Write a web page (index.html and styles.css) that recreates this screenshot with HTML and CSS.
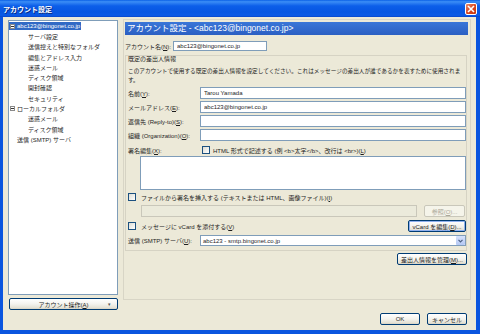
FILE: index.html
```html
<!DOCTYPE html>
<html>
<head>
<meta charset="utf-8">
<title>アカウント設定</title>
<link rel="stylesheet" href="styles.css">
</head>
<body>
<div class="window">
	<div class="titlebar">
		<span class="title">アカウント設定</span>
		<span class="close"><svg width="8" height="8" viewBox="0 0 8 8"><path d="M1 1L7 7M7 1L1 7" stroke="#fff" stroke-width="1.6"/></svg></span>
	</div>
	<div class="client">
		<div class="content">
			<div class="side">
				<ul class="tree">
					<li class="top"><span class="sel"><i class="twisty"></i>abc123@bingonet.co.jp</span></li>
					<li class="child">サーバ設定</li>
					<li class="child">送信控えと特別なフォルダ</li>
					<li class="child">編集とアドレス入力</li>
					<li class="child">迷惑メール</li>
					<li class="child">ディスク領域</li>
					<li class="child">開封確認</li>
					<li class="child">セキュリティ</li>
					<li class="top"><i class="twisty"></i>ローカルフォルダ</li>
					<li class="child">迷惑メール</li>
					<li class="child">ディスク領域</li>
					<li class="top leaf">送信 (SMTP) サーバ</li>
				</ul>
				<button class="btn menu"><span></span><span>アカウント操作(<u>A</u>)</span><span class="arrow">▾</span></button>
			</div>
			<div class="panel">
				<div class="phead">アカウント設定 - &lt;abc123@bingonet.co.jp&gt;</div>
				<div class="acct">
					<label>アカウント名(<u>N</u>):</label>
					<input type="text" value="abc123@bingonet.co.jp">
				</div>
				<div class="group">
					<div class="legend">既定の差出人情報</div>
					<p class="desc">このアカウントで使用する既定の差出人情報を設定してください。これはメッセージの差出人が誰であるかを表すために使用されま<br>す。</p>
					<div class="row first"><label>名前(<u>Y</u>):</label><input type="text" value="Tarou Yamada"></div>
					<div class="row"><label>メールアドレス(<u>E</u>):</label><input type="text" value="abc123@bingonet.co.jp"></div>
					<div class="row"><label>返信先 (Reply-to)(<u>S</u>):</label><input type="text" value=""></div>
					<div class="row"><label>組織 (Organization)(<u>O</u>):</label><input type="text" value=""></div>
					<div class="row sig"><label>署名編集(<u>X</u>):</label><i class="check"></i><span>HTML 形式で記述する (例 &lt;b&gt;太字&lt;/b&gt;、改行は &lt;br&gt;)(<u>L</u>)</span></div>
					<textarea class="sigtext"></textarea>
					<div class="row opt file"><i class="check"></i><span>ファイルから署名を挿入する (テキストまたは HTML、画像ファイル)(<u>I</u>)</span></div>
					<div class="row path"><input type="text" class="off" value="" disabled><button class="btn" disabled>参照(<u>O</u>)...</button></div>
					<div class="row opt vcard"><i class="check"></i><span>メッセージに vCard を添付する(<u>V</u>)</span><button class="btn def">vCard を編集(<u>D</u>)...</button></div>
					<div class="row smtp"><label>送信 (SMTP) サーバ(<u>U</u>):</label><div class="select"><span>abc123 - smtp.bingonet.co.jp</span><i class="drop"><svg width="5" height="4" viewBox="0 0 5 4"><path d="M0.5 0.8L2.5 2.8L4.5 0.8" fill="none" stroke="#4d6185" stroke-width="1.2"/></svg></i></div></div>
				</div>
				<div class="manage"><button class="btn">差出人情報を管理(<u>M</u>)...</button></div>
			</div>
		</div>
		<div class="footer">
			<button class="btn">OK</button>
			<button class="btn">キャンセル</button>
		</div>
	</div>
</div>
</body>
</html>
```

FILE: styles.css
```css
*{ margin:0; padding:0; box-sizing:border-box; list-style:none;}
body{ background:#ECE9D8; font-family:"Liberation Sans","Noto Sans CJK JP",sans-serif; font-size:6px; color:#1e1e1e;}
u{ text-decoration:underline;}

.window{ width:480px; height:334px; background:#0a55df; display:flex; flex-direction:column;}
.titlebar{ height:17px; display:flex; align-items:center; justify-content:space-between; padding:0 3px 0 3px;
	background:linear-gradient(#0a60e6 0%,#3b8df6 10%,#0c5ee9 35%,#0756e2 70%,#0b5ae6 90%,#0845c9 100%);}
.title{ color:#fff; font-size:7px; font-weight:bold; text-shadow:1px 1px #0a2a80;}
.close{ width:12px; height:12px; border:1px solid #fff; border-radius:2px; background:linear-gradient(135deg,#e98a6c,#d9441c 55%,#c2360f); display:flex; align-items:center; justify-content:center;}

.client{ flex:1; margin:0 4px 4px 3px; background:#ECE9D8; padding:3px 9px 0 5px;}
.content{ display:flex; height:290px;}

.side{ width:110px; display:flex; flex-direction:column;}
.tree{ height:275px; background:#fff; border:1px solid #7f9db9;}
.tree li{ height:10.3px; display:flex; align-items:center; white-space:nowrap;}
.tree li.child{ padding-left:19px;}
.tree li.top{ padding-left:1px;}
.tree li.leaf{ padding-left:8px;}
.sel{ display:flex; align-items:center; height:8px; background:#316ac5; color:#fff; padding-right:1px; margin-left:-1px; padding-left:1px;}
.twisty{ display:inline-block; width:5px; height:5px; border:1px solid #8a8a8a; background:#fff; margin-right:2px; position:relative;}
.twisty:after{ content:""; position:absolute; left:0; top:1px; width:3px; height:1px; background:#333;}

.btn{ height:12px; border:1px solid #003c74; border-radius:2px; font:inherit; color:#1e1e1e; padding:0 3px;
	background:linear-gradient(#fff 0%,#f4f3ee 50%,#e3e0d3 90%,#d6d0c0 100%); white-space:nowrap;}
.btn:disabled{ border-color:#c9c7ba; color:#aca899; background:#f5f4ea;}
.btn.def{ box-shadow:inset 0 0 0 1px #8fb0ee;}
.menu{ margin:3px 0 0 1px; width:109px; display:grid; grid-template-columns:1fr auto 1fr; align-items:center;}
.menu .arrow{ justify-self:end; padding-right:3px; color:#555; font-size:5px;}

.panel{ width:348px; height:281px; margin:-1px 0 0 5px; border:1px solid #d8d5c6;}
.phead{ height:13px; margin:2px 2px 0 1px; padding-left:2px; background:linear-gradient(#3a76d8,#2b5fc3); color:#fff; font-size:8.5px; line-height:13px; white-space:nowrap;}

input[type=text]{ height:12px; border:1px solid #7f9db9; background:#fff; font:inherit; color:#1e1e1e; padding:0 3px; outline:none;}
input.off{ background:#ebeadb; border-color:#c9c7ba;}

.acct{ display:flex; align-items:center; height:10px; margin:6px 0 0 1px;}
.acct label{ width:48px; white-space:nowrap;}
.acct input{ width:94px; height:10px;}

.group{ margin:4px 3px 0 1px; border:1px solid #d6d3c4; padding:0 0 4px 2px;}
.legend{ height:7px; line-height:7px;}
.desc{ margin-top:4px; line-height:9px; font-size:5.65px; white-space:nowrap;}
.row{ display:flex; align-items:center; height:12px; margin-top:2px; white-space:nowrap;}
.row label{ width:72px; flex:none;}
.row input{ flex:1;}
.row.sig{ height:10px; margin-top:4px;}
.row.sig .check{ margin:0 3px 0 2px;}
.check{ display:inline-block; flex:none; width:8px; height:8px; border:1px solid #1c5180; background:linear-gradient(135deg,#dcdcd4,#fff);}
.sigtext{ display:block; width:326px; height:34px; margin:1px 0 0 12px; border:1px solid #7f9db9; background:#fff; resize:none;}
.row.opt .check{ margin-right:5px;}
.row.file{ height:10px;}
.row.path{ margin-top:3px;}
.row.path input{ flex:none; width:276px; margin-left:13px;}
.row.path .btn{ width:41px; margin-left:7px;}
.row.vcard{ margin-top:3px;}
.row.vcard .btn{ margin-left:auto; width:58px;}
.row.smtp{ height:11px; margin-top:3px;}
.select{ flex:1; height:11px; border:1px solid #7f9db9; background:#fff; display:flex; align-items:center; justify-content:space-between; padding-left:2px;}
.drop{ width:9px; height:9px; border-radius:1px; background:linear-gradient(#d6e2fc,#b4c8f4); display:flex; align-items:center; justify-content:center;}

.manage{ display:flex; justify-content:flex-end; margin:2px 3px 0 0;}
.manage .btn{ width:70px;}

.footer{ display:flex; justify-content:flex-end; gap:7px; margin-top:3px;}
.footer .btn{ width:40px;}
```
